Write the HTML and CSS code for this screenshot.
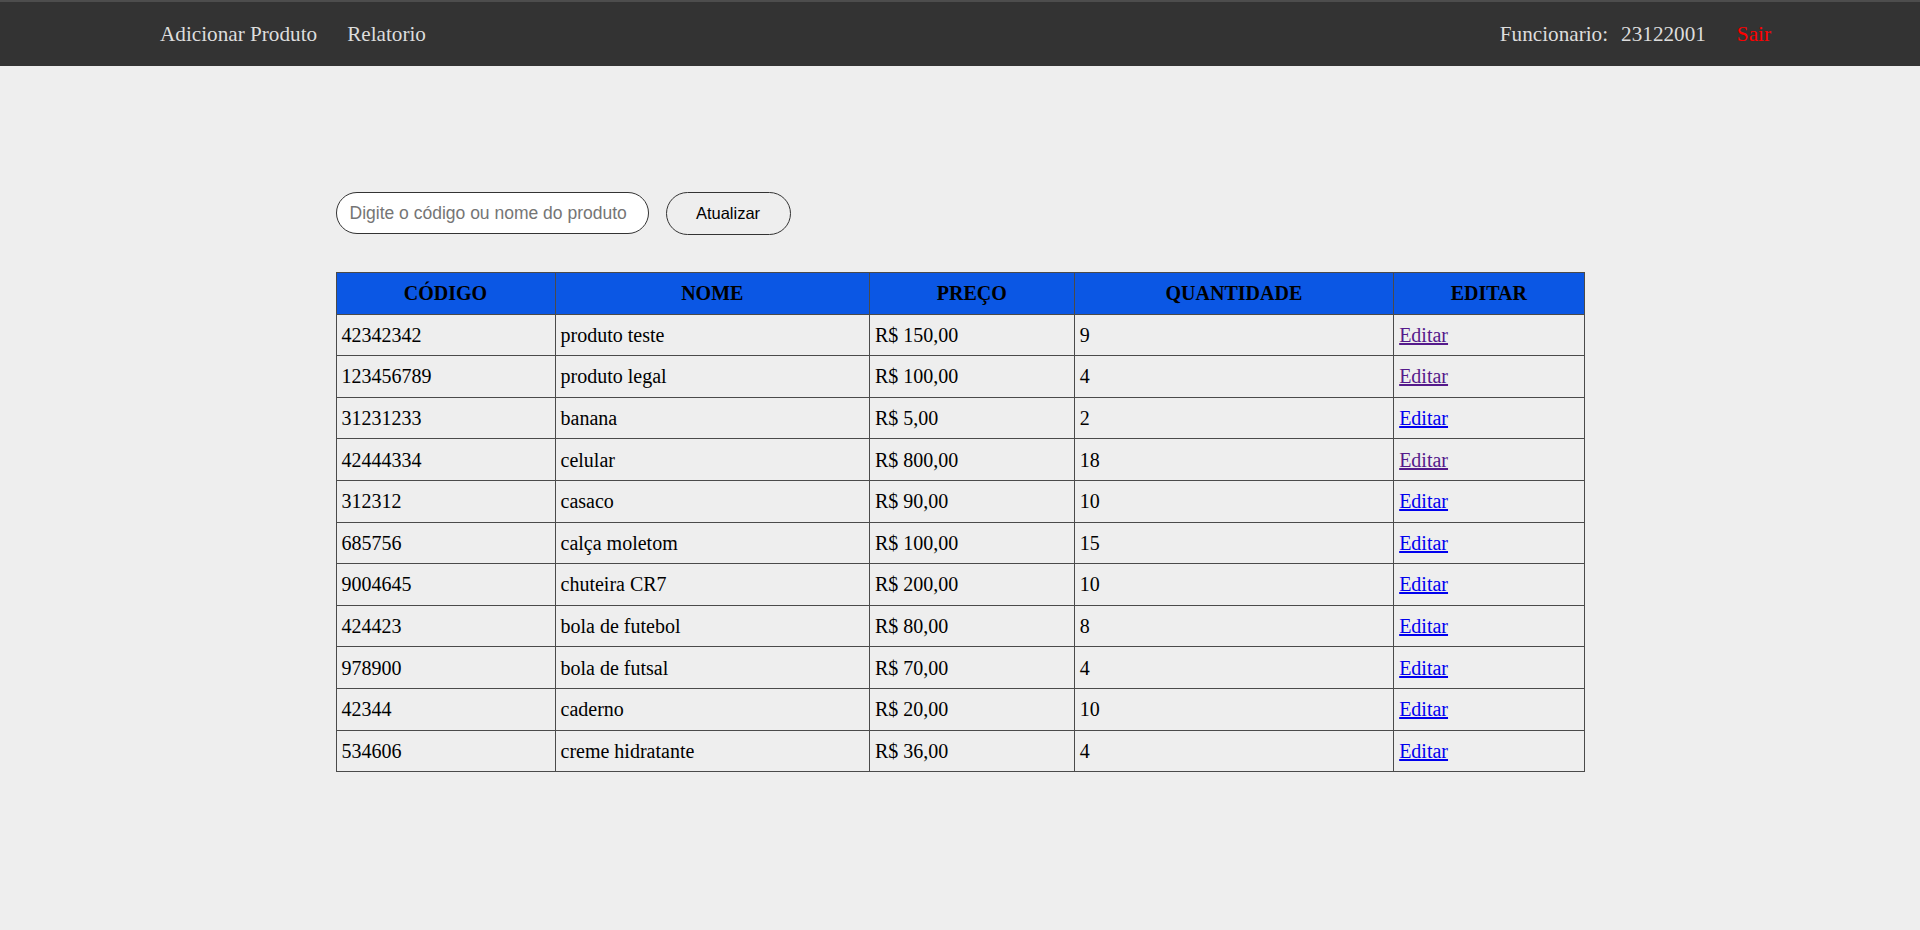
FILE: index.html
```html
<!DOCTYPE html>
<html lang="pt-BR">
<head>
<meta charset="utf-8">
<title>Produtos</title>
<link rel="stylesheet" href="styles.css">
</head>
<body>
<nav class="navbar">
  <div class="nav-left">
    <a class="nav-link" href="#">Adicionar Produto</a>
    <a class="nav-link" href="#">Relatorio</a>
  </div>
  <div class="nav-right">
    <span class="nav-user">Funcionario:</span>
    <span class="nav-id">23122001</span>
    <a class="nav-exit" href="#">Sair</a>
  </div>
</nav>

<main class="content">
  <div class="search-row">
    <input class="search-input" type="text" placeholder="Digite o código ou nome do produto">
    <button class="refresh-btn" type="button">Atualizar</button>
  </div>

  <table class="product-table">
    <colgroup>
      <col class="col-code">
      <col class="col-name">
      <col class="col-price">
      <col class="col-qty">
      <col class="col-edit">
    </colgroup>
    <thead>
      <tr><th>CÓDIGO</th><th>NOME</th><th>PREÇO</th><th>QUANTIDADE</th><th>EDITAR</th></tr>
    </thead>
    <tbody>
      <tr><td>42342342</td><td>produto teste</td><td>R$ 150,00</td><td>9</td><td><a class="edit visited" href="#">Editar</a></td></tr>
      <tr><td>123456789</td><td>produto legal</td><td>R$ 100,00</td><td>4</td><td><a class="edit visited" href="#">Editar</a></td></tr>
      <tr><td>31231233</td><td>banana</td><td>R$ 5,00</td><td>2</td><td><a class="edit" href="#">Editar</a></td></tr>
      <tr><td>42444334</td><td>celular</td><td>R$ 800,00</td><td>18</td><td><a class="edit visited" href="#">Editar</a></td></tr>
      <tr><td>312312</td><td>casaco</td><td>R$ 90,00</td><td>10</td><td><a class="edit" href="#">Editar</a></td></tr>
      <tr><td>685756</td><td>calça moletom</td><td>R$ 100,00</td><td>15</td><td><a class="edit" href="#">Editar</a></td></tr>
      <tr><td>9004645</td><td>chuteira CR7</td><td>R$ 200,00</td><td>10</td><td><a class="edit" href="#">Editar</a></td></tr>
      <tr><td>424423</td><td>bola de futebol</td><td>R$ 80,00</td><td>8</td><td><a class="edit" href="#">Editar</a></td></tr>
      <tr><td>978900</td><td>bola de futsal</td><td>R$ 70,00</td><td>4</td><td><a class="edit" href="#">Editar</a></td></tr>
      <tr><td>42344</td><td>caderno</td><td>R$ 20,00</td><td>10</td><td><a class="edit" href="#">Editar</a></td></tr>
      <tr><td>534606</td><td>creme hidratante</td><td>R$ 36,00</td><td>4</td><td><a class="edit" href="#">Editar</a></td></tr>
    </tbody>
  </table>
</main>
</body>
</html>
```

FILE: styles.css
```css
* { box-sizing: border-box; }

html, body {
  margin: 0;
  padding: 0;
  background: #eeeeee;
  font-family: "Liberation Serif", "Times New Roman", serif;
  color: #000;
}

.navbar {
  height: 66px;
  background: #333333;
  border-top: 2px solid #4d4d4d;
  display: flex;
  align-items: center;
  justify-content: space-between;
  padding: 0 149px 0 160px;
  font-size: 21.2px;
}

.nav-left, .nav-right {
  display: flex;
  align-items: center;
}

.nav-left { gap: 30px; }

.nav-link {
  color: #dddddd;
  text-decoration: none;
}

.nav-user { color: #dddddd; }

.nav-id {
  color: #dddddd;
  margin-left: 13px;
}

.nav-exit {
  color: #ff0000;
  text-decoration: none;
  margin-left: 31px;
}

.content {
  width: 1249px;
  margin: 126px auto 0;
}

.search-row {
  display: flex;
  align-items: flex-start;
  gap: 17px;
  margin-bottom: 37px;
}

.search-input {
  width: 313px;
  height: 42px;
  padding: 0 13px;
  border: 1px solid #333;
  border-radius: 21px;
  background: #fff;
  font-family: "Liberation Sans", Arial, sans-serif;
  font-size: 17.5px;
  color: #000;
  outline: none;
}

.search-input::placeholder { color: #757575; }

.refresh-btn {
  width: 125px;
  height: 43px;
  border: 1px solid #333;
  border-radius: 22px;
  background: transparent;
  font-family: "Liberation Sans", Arial, sans-serif;
  font-size: 16.5px;
  color: #000;
  padding: 0;
}

.product-table {
  width: 100%;
  border-collapse: collapse;
  font-size: 20px;
}

.col-code { width: 17.55%; }
.col-name { width: 25.2%; }
.col-price { width: 16.4%; }
.col-qty { width: 25.6%; }
.col-edit { width: 15.25%; }

.product-table th,
.product-table td {
  border: 1px solid #4a4a4a;
  padding: 9.3px 5px 8.3px;
  text-align: left;
}

.product-table th {
  background: #0b57e4;
  text-align: center;
  font-weight: bold;
}

.edit { color: #0000ee; }
.edit.visited { color: #551a8b; }
```
